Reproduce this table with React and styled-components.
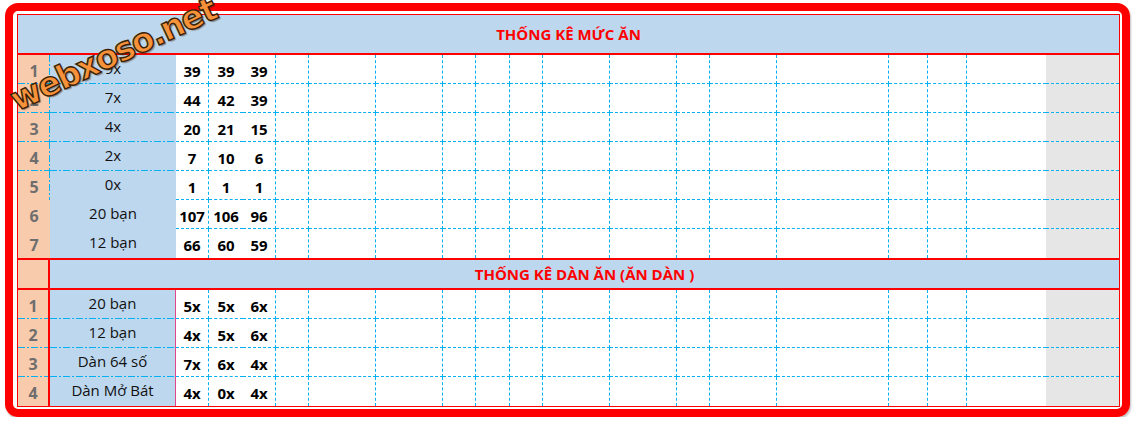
import React from 'react';
import styled, { createGlobalStyle, css } from 'styled-components';

const GlobalStyle = createGlobalStyle`
  *, *::before, *::after { box-sizing: border-box; }
  body {
    margin: 0;
    background: #fff;
    font-family: "Open Sans", "Noto Sans", sans-serif;
  }
`;

const RED = '#FF0000';
const GRID_BLUE = '#00B0F0';
const HEAD_BLUE = '#BDD7EE';
const ORANGE = '#F8CBAD';
const GRAY = '#E6E6E6';

// data columns: [width, dashed line on the right]
const DATA_COLS = [
  [33, true], [34, false], [33, true], [33, true], [67, true], [67, true],
  [33, true], [34, true], [33, true], [67, true], [67, true], [33, true],
  [67, true], [112, true], [39, true], [39, true], [79, false],
];

const TEMPLATE = `32px 126px ${DATA_COLS.map(([w]) => `${w}px`).join(' ')} 73px`;

const dashDotH = `repeating-linear-gradient(90deg, ${GRID_BLUE} 0 7px, transparent 7px 9px, ${GRID_BLUE} 9px 11px, transparent 11px 13px)`;
const dashDotV = `repeating-linear-gradient(180deg, ${GRID_BLUE} 0 7px, transparent 7px 9px, ${GRID_BLUE} 9px 11px, transparent 11px 13px)`;

const dashDot = ({ $dotBottom, $dotRight }) => {
  const layers = [];
  if ($dotBottom) layers.push([dashDotH, '100% 1px', 'left bottom']);
  if ($dotRight) layers.push([dashDotV, '1px 100%', 'right top']);
  if (!layers.length) return '';
  return css`
    background-image: ${layers.map((l) => l[0]).join(', ')};
    background-size: ${layers.map((l) => l[1]).join(', ')};
    background-position: ${layers.map((l) => l[2]).join(', ')};
    background-repeat: no-repeat;
  `;
};

const Frame = styled.div`
  position: relative;
  width: fit-content;
  margin: 3px 0 0 5px;
  padding: 3px 2px 2px 4px;
  border: 8px solid ${RED};
  border-radius: 13px;
  box-shadow: 1px 2px 2px rgba(0, 0, 0, 0.25);
`;

const Table = styled.div`
  width: 1103px;
  border: 1px solid ${RED};
  background: #fff;
`;

const TitleRow = styled.div`
  height: 40px;
  display: flex;
  align-items: center;
  justify-content: center;
  background: ${HEAD_BLUE};
  color: ${RED};
  font-weight: 700;
  font-size: 15px;
  border-bottom: 2px solid ${RED};
`;

const SubHead = styled.div`
  display: grid;
  grid-template-columns: 32px 1fr;
  border-top: 2px solid ${RED};
  border-bottom: 2px solid ${RED};
  height: 32px;
`;

const SubHeadIndex = styled.div`
  background: ${ORANGE};
  border-right: 2px solid ${RED};
`;

const SubHeadTitle = styled.div`
  display: flex;
  align-items: center;
  justify-content: center;
  background: ${HEAD_BLUE};
  color: ${RED};
  font-weight: 700;
  font-size: 15px;
  padding-bottom: 1px;
`;

const Row = styled.div`
  display: grid;
  grid-template-columns: ${TEMPLATE};
  height: 29px;
`;

const IndexCell = styled.div`
  display: flex;
  justify-content: center;
  padding-top: 6px;
  background-color: ${ORANGE};
  color: #6e6e6e;
  font-weight: 700;
  font-size: 16px;
  line-height: 20px;
  ${dashDot}
  ${(p) => p.$redRight && css`border-right: 2px solid ${RED};`}
`;

const LabelCell = styled.div`
  display: flex;
  justify-content: center;
  padding-top: 3px;
  background-color: ${HEAD_BLUE};
  color: #111;
  font-size: 15px;
  line-height: 20px;
  white-space: nowrap;
  ${dashDot}
  ${(p) => p.$pinkRight && css`border-right: 1px solid #E2468A;`}
`;

const DataCell = styled.div`
  display: flex;
  justify-content: center;
  padding-top: 6px;
  background: #fff;
  color: #000;
  font-weight: 700;
  font-size: 15px;
  line-height: 20px;
  white-space: nowrap;
  ${(p) => p.$right && css`border-right: 1px dashed ${GRID_BLUE};`}
  ${(p) => p.$bottom && css`border-bottom: 1px dashed ${GRID_BLUE};`}
`;

const GrayCell = styled.div`
  background: ${GRAY};
  ${(p) => p.$bottom && css`border-bottom: 1px dashed ${GRID_BLUE};`}
`;

const Watermark = styled.div`
  position: absolute;
  left: 100px;
  top: 43px;
  transform: translate(-50%, -50%) rotate(-25deg);
  font-family: "DejaVu Sans", sans-serif;
  font-weight: 700;
  font-size: 33px;
  letter-spacing: -1.3px;
  color: #F7923A;
  -webkit-text-stroke: 1.4px #3a1f06;
  text-shadow: 1px 2px 1px rgba(60, 30, 0, 0.45);
  white-space: nowrap;
  pointer-events: none;
`;

const MUC_AN = [
  ['9x', ['39', '39', '39']],
  ['7x', ['44', '42', '39']],
  ['4x', ['20', '21', '15']],
  ['2x', ['7', '10', '6']],
  ['0x', ['1', '1', '1']],
  ['20 bạn', ['107', '106', '96']],
  ['12 bạn', ['66', '60', '59']],
];

const DAN_AN = [
  ['20 bạn', ['5x', '5x', '6x']],
  ['12 bạn', ['4x', '5x', '6x']],
  ['Dàn 64 số', ['7x', '6x', '4x']],
  ['Dàn Mở Bát', ['4x', '0x', '4x']],
];

const DataCells = ({ values, bottom }) =>
  DATA_COLS.map(([, right], i) => (
    <DataCell key={i} $right={right} $bottom={bottom}>
      {values[i] || ''}
    </DataCell>
  ));

const App = () => (
  <>
    <GlobalStyle />
    <Frame>
      <Table>
        <TitleRow>THỐNG KÊ MỨC ĂN</TitleRow>
        {MUC_AN.map(([label, values], i) => (
          <Row key={label + i}>
            <IndexCell $dotBottom={i < 4} $dotRight={i < 5}>{i + 1}</IndexCell>
            <LabelCell $dotBottom={i < 4}>{label}</LabelCell>
            <DataCells values={values} bottom={i < MUC_AN.length - 1} />
            <GrayCell $bottom={i < MUC_AN.length - 1} />
          </Row>
        ))}
        <SubHead>
          <SubHeadIndex />
          <SubHeadTitle>THỐNG KÊ DÀN ĂN (ĂN DÀN )</SubHeadTitle>
        </SubHead>
        {DAN_AN.map(([label, values], i) => (
          <Row key={label}>
            <IndexCell $dotBottom={i < 3} $redRight>{i + 1}</IndexCell>
            <LabelCell $dotBottom={i < 3} $pinkRight>{label}</LabelCell>
            <DataCells values={values} bottom={i < DAN_AN.length - 1} />
            <GrayCell $bottom={i < DAN_AN.length - 1} />
          </Row>
        ))}
      </Table>
      <Watermark>webxoso.net</Watermark>
    </Frame>
  </>
);

export default App;
